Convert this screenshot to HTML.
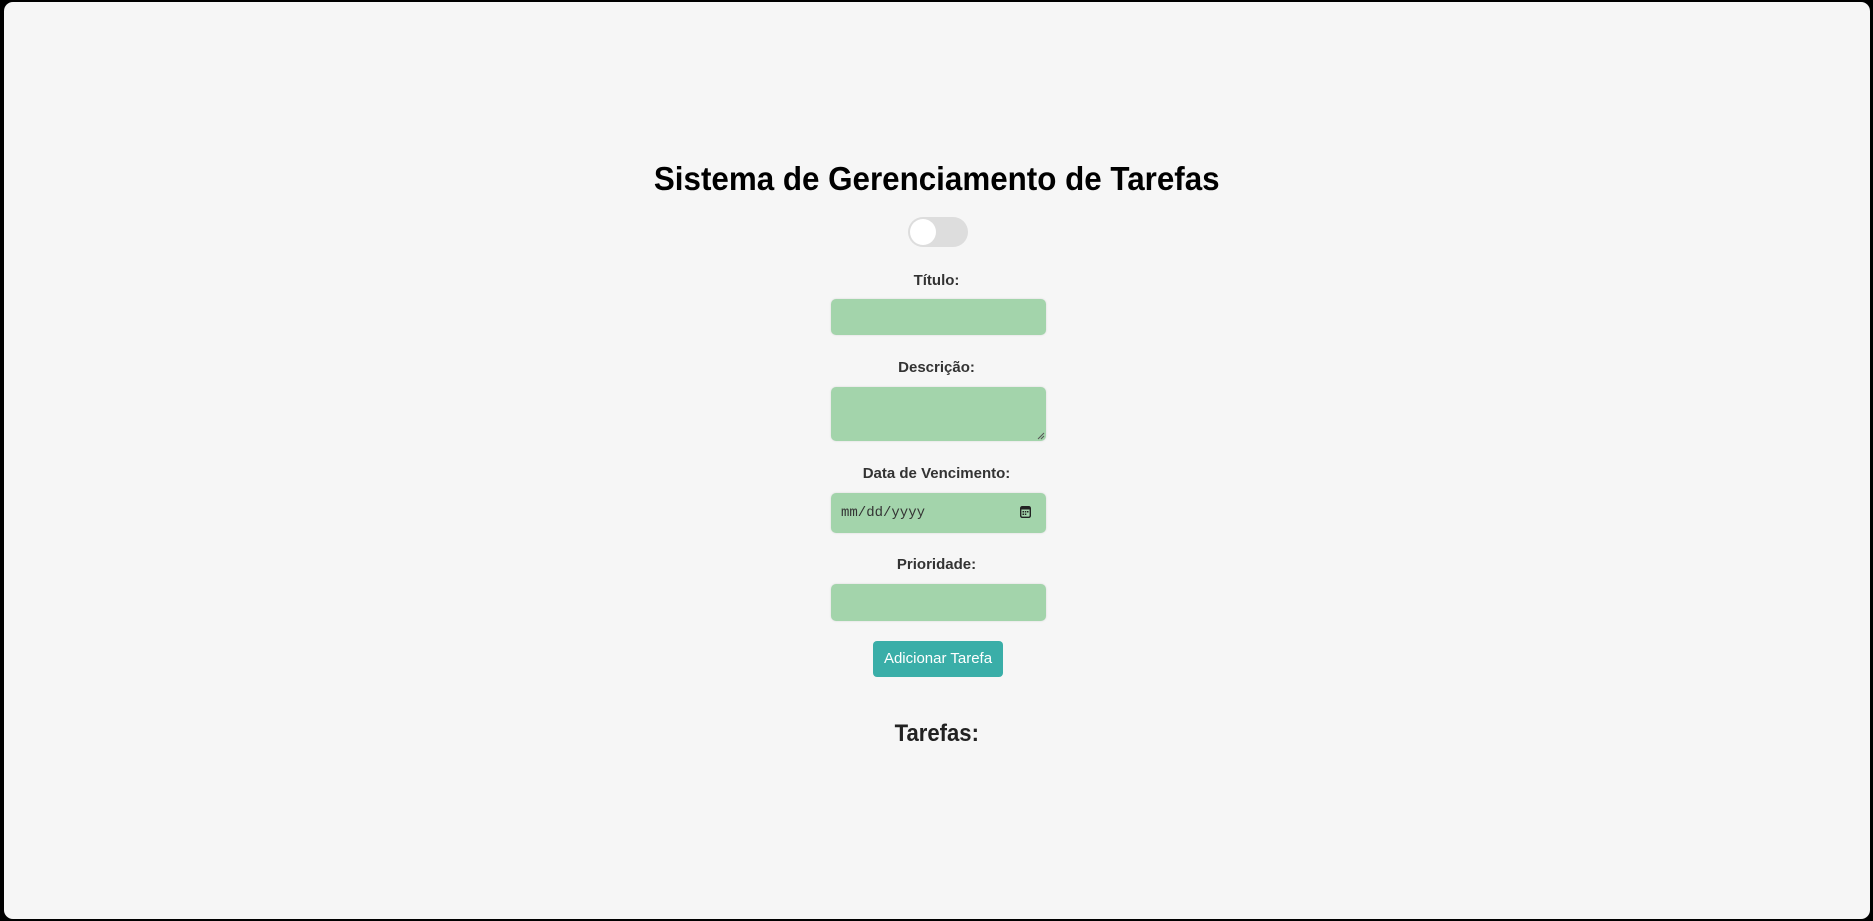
<!DOCTYPE html>
<html><head><meta charset="utf-8">
<style>
html,body{margin:0;padding:0;width:1873px;height:921px;overflow:hidden;background:#000;}
.frame{position:absolute;left:4px;top:2px;width:1866px;height:917px;background:#f6f6f6;border-radius:9px;}
.abs{position:absolute;}
.c{left:0;width:1873px;text-align:center;font-family:"Liberation Sans",sans-serif;}
h1{margin:0;font-size:33px;font-weight:bold;color:#000;}
.lbl{font-size:15px;font-weight:bold;color:#333;}
.inp{left:831px;width:215px;background:#a3d4ab;border-radius:5px;box-shadow:0 0 2px rgba(0,0,0,.12);}
</style></head><body>
<div class="frame"></div>
<div class="abs c" style="top:160px;"><h1 style="display:inline-block;transform:scaleX(0.95);">Sistema de Gerenciamento de Tarefas</h1></div>
<div class="abs" style="left:908px;top:217px;width:60px;height:30px;border-radius:15px;background:#ddd;"></div>
<div class="abs" style="left:910px;top:219px;width:26px;height:26px;border-radius:13px;background:#fff;"></div>
<div class="abs c lbl" style="top:272px;">Título:</div>
<div class="abs inp" style="top:299px;height:36px;"></div>
<div class="abs c lbl" style="top:359px;">Descrição:</div>
<div class="abs inp" style="top:387px;height:54px;"></div>
<svg class="abs" style="left:1037px;top:432px" width="8" height="8"><path d="M1 7L7 1M4 7L7 4" stroke="#555" stroke-width="1"/></svg>
<div class="abs c lbl" style="top:465px;">Data de Vencimento:</div>
<div class="abs inp" style="top:493px;height:40px;"></div>
<div class="abs" style="left:841px;top:505px;font-family:'Liberation Mono',monospace;font-size:14px;color:#333;">mm/dd/yyyy</div>
<svg class="abs" style="left:1020px;top:506px" width="11" height="12"><rect x="0.7" y="0.7" width="9.6" height="10.6" rx="1.5" fill="none" stroke="#222" stroke-width="1.4"/><rect x="1" y="1" width="9" height="2.5" fill="#222"/><rect x="2.5" y="5" width="1.5" height="1.5" fill="#222"/><rect x="4.8" y="5" width="1.5" height="1.5" fill="#222"/><rect x="7" y="5" width="1.5" height="1.5" fill="#222"/><rect x="2.5" y="7.5" width="1.5" height="1.5" fill="#222"/><rect x="4.8" y="7.5" width="1.5" height="1.5" fill="#222"/></svg>
<div class="abs c lbl" style="top:556px;">Prioridade:</div>
<div class="abs inp" style="top:584px;height:37px;"></div>
<div class="abs" style="left:873px;top:641px;width:130px;height:36px;background:#3aaea8;border-radius:4px;color:#fff;font-family:'Liberation Sans',sans-serif;font-size:15px;line-height:36px;text-align:center;">Adicionar Tarefa</div>
<div class="abs c" style="top:720px;font-size:24px;font-weight:bold;color:#222;"><span style="display:inline-block;transform:scaleX(0.92)">Tarefas:</span></div>
</body></html>
